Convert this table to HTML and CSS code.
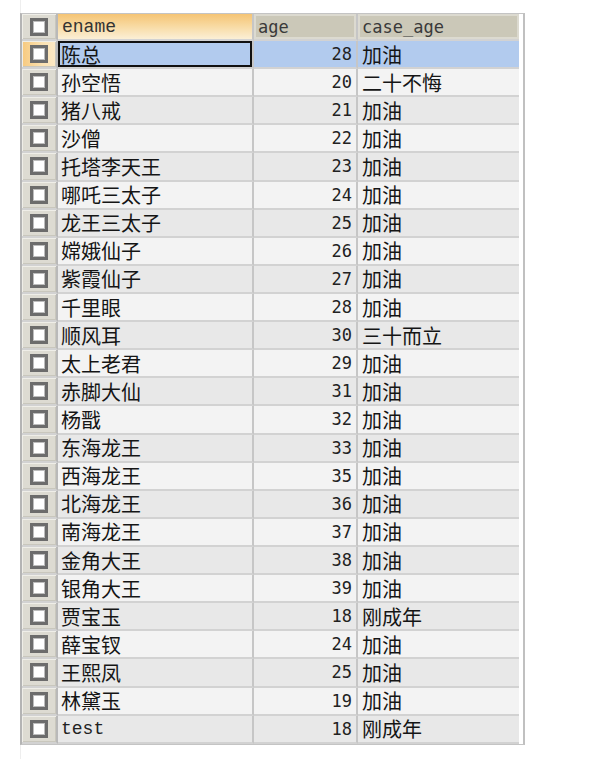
FILE: index.html
```html
<!DOCTYPE html>
<html>
<head>
<meta charset="utf-8">
<link rel="stylesheet" href="styles.css">
</head>
<body>
<div class="pane">
  <div class="grid">
    <div class="row head">
      <div class="cell chk"><span class="box"></span></div>
      <div class="cell hd hd-sel">ename</div>
      <div class="cell hd">age</div>
      <div class="cell hd">case_age</div>
    </div>
    <div class="row selected">
      <div class="cell chk chk-sel"><span class="box"></span></div>
      <div class="cell name focus">陈总</div>
      <div class="cell num">28</div>
      <div class="cell txt">加油</div>
    </div>
    <div class="row light"><div class="cell chk"><span class="box"></span></div><div class="cell name">孙空悟</div><div class="cell num">20</div><div class="cell txt">二十不悔</div></div>
    <div class="row dark"><div class="cell chk"><span class="box"></span></div><div class="cell name">猪八戒</div><div class="cell num">21</div><div class="cell txt">加油</div></div>
    <div class="row light"><div class="cell chk"><span class="box"></span></div><div class="cell name">沙僧</div><div class="cell num">22</div><div class="cell txt">加油</div></div>
    <div class="row dark"><div class="cell chk"><span class="box"></span></div><div class="cell name">托塔李天王</div><div class="cell num">23</div><div class="cell txt">加油</div></div>
    <div class="row light"><div class="cell chk"><span class="box"></span></div><div class="cell name">哪吒三太子</div><div class="cell num">24</div><div class="cell txt">加油</div></div>
    <div class="row dark"><div class="cell chk"><span class="box"></span></div><div class="cell name">龙王三太子</div><div class="cell num">25</div><div class="cell txt">加油</div></div>
    <div class="row light"><div class="cell chk"><span class="box"></span></div><div class="cell name">嫦娥仙子</div><div class="cell num">26</div><div class="cell txt">加油</div></div>
    <div class="row dark"><div class="cell chk"><span class="box"></span></div><div class="cell name">紫霞仙子</div><div class="cell num">27</div><div class="cell txt">加油</div></div>
    <div class="row light"><div class="cell chk"><span class="box"></span></div><div class="cell name">千里眼</div><div class="cell num">28</div><div class="cell txt">加油</div></div>
    <div class="row dark"><div class="cell chk"><span class="box"></span></div><div class="cell name">顺风耳</div><div class="cell num">30</div><div class="cell txt">三十而立</div></div>
    <div class="row light"><div class="cell chk"><span class="box"></span></div><div class="cell name">太上老君</div><div class="cell num">29</div><div class="cell txt">加油</div></div>
    <div class="row dark"><div class="cell chk"><span class="box"></span></div><div class="cell name">赤脚大仙</div><div class="cell num">31</div><div class="cell txt">加油</div></div>
    <div class="row light"><div class="cell chk"><span class="box"></span></div><div class="cell name">杨戬</div><div class="cell num">32</div><div class="cell txt">加油</div></div>
    <div class="row dark"><div class="cell chk"><span class="box"></span></div><div class="cell name">东海龙王</div><div class="cell num">33</div><div class="cell txt">加油</div></div>
    <div class="row light"><div class="cell chk"><span class="box"></span></div><div class="cell name">西海龙王</div><div class="cell num">35</div><div class="cell txt">加油</div></div>
    <div class="row dark"><div class="cell chk"><span class="box"></span></div><div class="cell name">北海龙王</div><div class="cell num">36</div><div class="cell txt">加油</div></div>
    <div class="row light"><div class="cell chk"><span class="box"></span></div><div class="cell name">南海龙王</div><div class="cell num">37</div><div class="cell txt">加油</div></div>
    <div class="row dark"><div class="cell chk"><span class="box"></span></div><div class="cell name">金角大王</div><div class="cell num">38</div><div class="cell txt">加油</div></div>
    <div class="row light"><div class="cell chk"><span class="box"></span></div><div class="cell name">银角大王</div><div class="cell num">39</div><div class="cell txt">加油</div></div>
    <div class="row dark"><div class="cell chk"><span class="box"></span></div><div class="cell name">贾宝玉</div><div class="cell num">18</div><div class="cell txt">刚成年</div></div>
    <div class="row light"><div class="cell chk"><span class="box"></span></div><div class="cell name">薛宝钗</div><div class="cell num">24</div><div class="cell txt">加油</div></div>
    <div class="row dark"><div class="cell chk"><span class="box"></span></div><div class="cell name">王熙凤</div><div class="cell num">25</div><div class="cell txt">加油</div></div>
    <div class="row light"><div class="cell chk"><span class="box"></span></div><div class="cell name">林黛玉</div><div class="cell num">19</div><div class="cell txt">加油</div></div>
    <div class="row dark"><div class="cell chk"><span class="box"></span></div><div class="cell name mono">test</div><div class="cell num">18</div><div class="cell txt">刚成年</div></div>
  </div>
</div>
</body>
</html>
```
FILE: styles.css
```css
html, body {
  margin: 0;
  padding: 0;
  background: #ffffff;
}

.pane {
  margin-left: 20px;
  padding-top: 13px;
  min-height: 746px;
  border-left: 1px solid #eeeeee;
}

.grid {
  width: 501px;
  margin-left: -1px;
  border-left: 2px solid #b4b4b4;
  border-right: 2px solid #c0c0c0;
  border-top: 1px solid #c4c4c4;
  border-bottom: 1px solid #c4c4c4;
  font-family: "Noto Sans CJK SC", "DejaVu Sans Mono", sans-serif;
  color: #151515;
}

.row {
  display: grid;
  grid-template-columns: 36px 196px 104px 161px;
  height: 28.12px;
}

.row.head {
  height: 27px;
}

.cell {
  box-sizing: border-box;
  border-right: 2px solid #c6c6c6;
  border-bottom: 2px solid #d2d2d2;
  display: flex;
  align-items: center;
  overflow: hidden;
  white-space: nowrap;
}

.cell:last-child {
  border-right: none;
}

.light .cell { background: #f3f3f3; }
.dark .cell { background: #e8e8e8; }
.selected .cell { background: #b2cbee; }

.row .chk {
  justify-content: center;
  background: #dddbd2;
  box-shadow: inset 1px 1px 0 #efeee8, inset -1px -1px 0 #c9c7bd;
  border-right-color: #b9b9b9;
}

.row .chk-sel {
  background: linear-gradient(90deg, #f7c97e, #fbe2b2 60%, #fce9c6);
}

.box {
  flex: 0 0 auto;
  width: 18px;
  height: 18px;
  box-sizing: border-box;
  border: 3px solid #6c6c6c;
  background: #ffffff;
  box-shadow: inset 0 0 0 1px #bdbdbd;
}

.hd {
  background: #cbc8b8;
  box-shadow: inset 0 0 0 2px #dcdad0;
  font-family: "DejaVu Sans Mono", monospace;
  font-size: 17px;
  color: #3a3a3a;
  padding-left: 4px;
  padding-top: 1px;
}

.row .hd-sel {
  background: linear-gradient(180deg, #f5c474 0%, #f8dba4 50%, #fbefd6 100%);
  box-shadow: none;
  font-family: "Liberation Mono", monospace;
  font-size: 18px;
  color: #333;
}

.name, .txt {
  font-size: 20px;
  padding-left: 3px;
}

.txt {
  padding-left: 4px;
}

.row .focus {
  box-shadow: inset 0 0 0 2px #111111;
}

.num {
  justify-content: flex-end;
  padding-right: 4px;
  font-family: "DejaVu Sans Mono", monospace;
  font-size: 17px;
  color: #222222;
}

.mono {
  font-family: "Liberation Mono", monospace;
  font-size: 18px;
  color: #222;
}
```
